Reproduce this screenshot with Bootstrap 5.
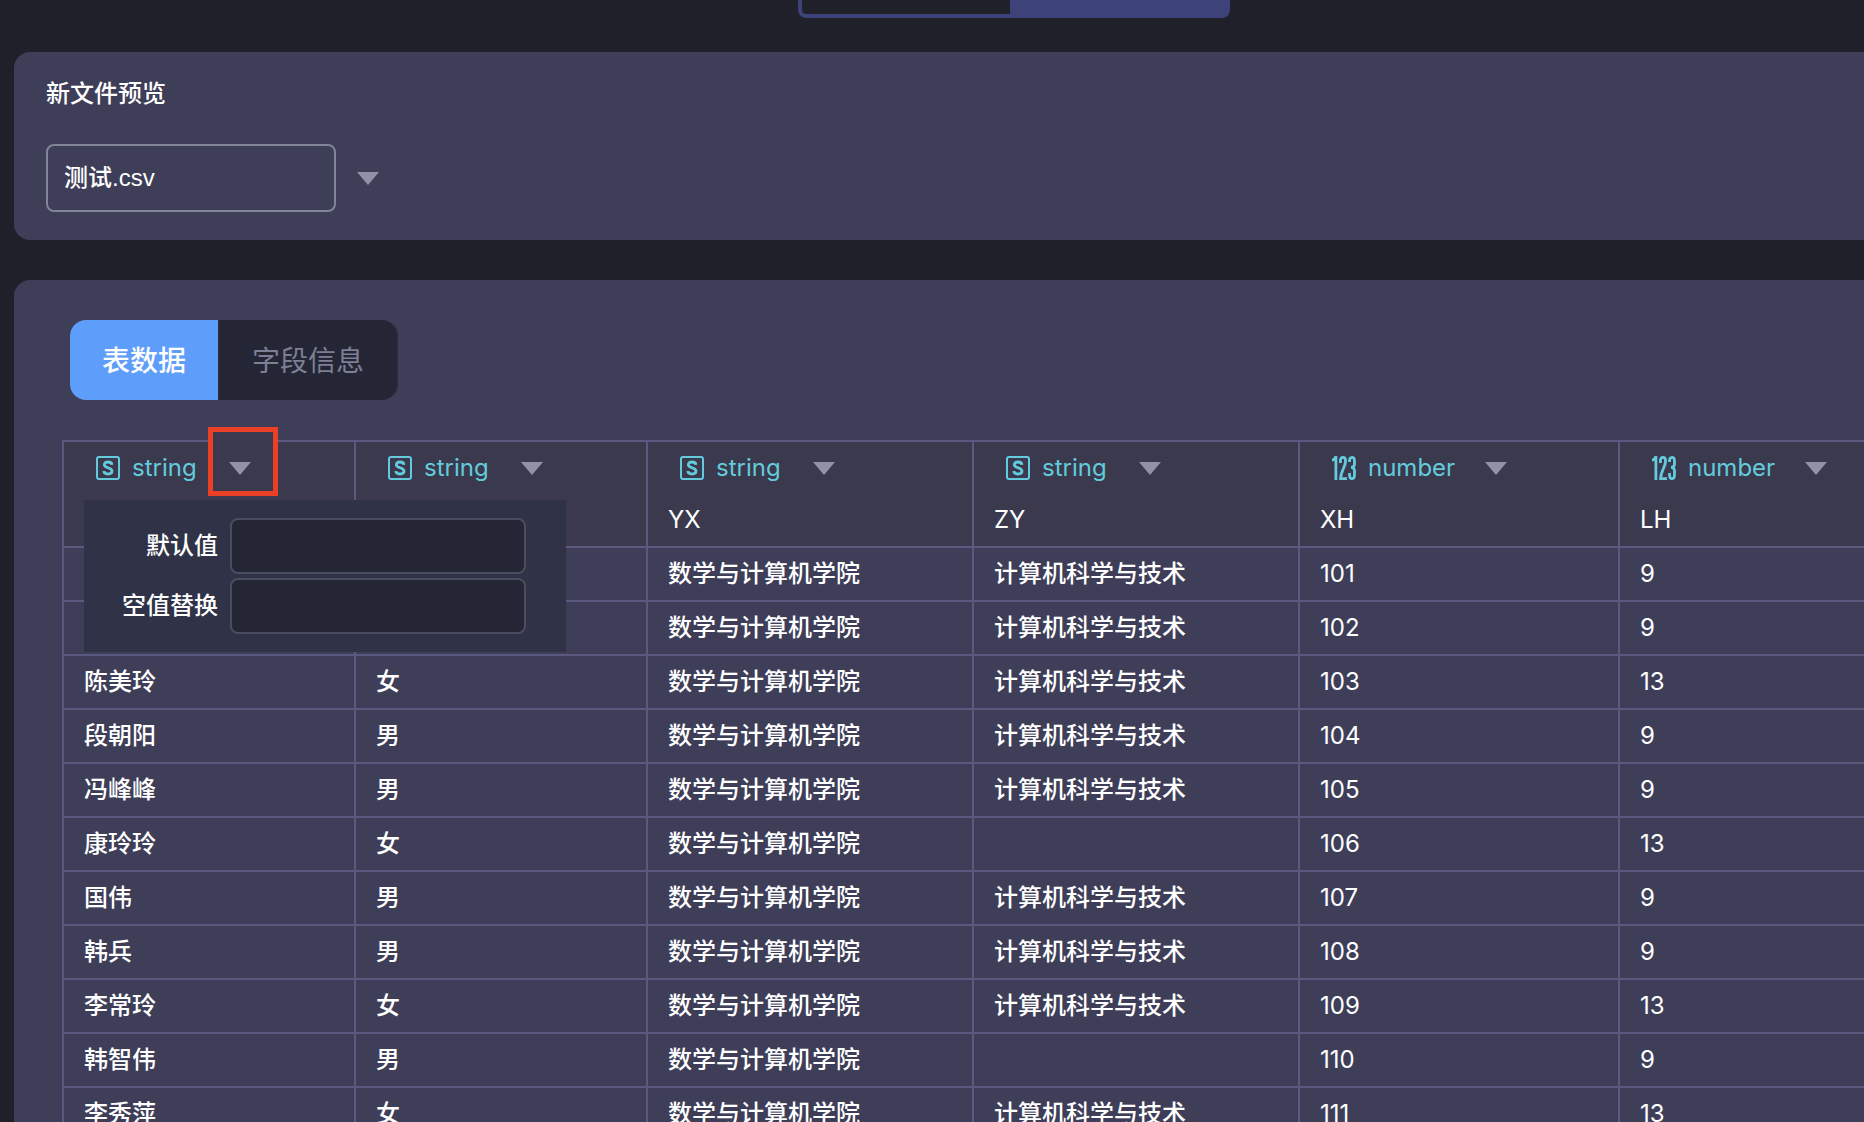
<!DOCTYPE html>
<html lang="zh-CN">
<head>
<meta charset="utf-8">
<meta name="viewport" content="width=device-width, initial-scale=1">
<title>新文件预览</title>
<link href="https://cdn.jsdelivr.net/npm/bootstrap@5.3.0/dist/css/bootstrap.min.css" rel="stylesheet">
<style>
  body { background: #20202b; color: #fff; font-family: Inter, "Noto Sans CJK SC", sans-serif; font-size: 24px; line-height: 36px; }
  .page-wide { width: calc(100% + 164px); padding: 0 14px; }
  .mode-switch { border: 4px solid #3d4279; border-top: 0; border-radius: 0 0 8px 8px; height: 18px; overflow: hidden; background: #3d4279; }
  .mode-switch button { width: 208px; border: 0; padding: 0; background: #20202b; border-radius: 0 0 0 4px; }
  .mode-switch button.is-on { width: 216px; background: #3d4279; }
  .panel { background: #3e3e59; border-radius: 16px; }
  .file-panel { padding: 24px 32px 28px; margin: 34px 0 40px; }
  .panel-title { font-size: 24px; line-height: 36px; font-weight: 500; margin: 0 0 32px; }
  .file-name { width: 290px; height: 68px; padding: 0 16px 6px; border: 2px solid #7f8496; border-radius: 8px; background: transparent; color: #fff; font-family: "Liberation Sans", "Noto Sans CJK SC", sans-serif; font-weight: 500; }
  .caret { border: 0; padding: 2px 0 0; background: none; display: flex; }
  .data-panel { padding: 40px 48px; border-bottom-left-radius: 0; }
  .view-tabs { margin: 0 0 40px 8px; }
  .view-tabs button { border: 0; height: 80px; padding: 2px 32px 0; font-size: 28px; background: #242636; color: #7d7f94; }
  .view-tabs button:first-child { background: #5e9df9; color: #fff; font-weight: 500; border-radius: 16px 0 0 16px; }
  .view-tabs button:last-child { border: solid #292b3c; border-width: 0 2px; border-radius: 0 16px 16px 0; }
  .data-grid { width: 1876px; table-layout: fixed; border-collapse: collapse; }
  .data-grid th, .data-grid td { border: 2px solid #5b597f; padding: 8px 20px; height: 54px; font-weight: 400; }
  .data-grid td:nth-child(-n+4) { font-weight: 500; }
  .data-grid th { background: #3a394e; background-clip: padding-box; height: 106px; padding: 8px 20px; vertical-align: top; }
  .c-short { width: 292px; } .c-long { width: 326px; } .c-num { width: 320px; }
  .kind { color: #63cbdb; padding-left: 12px; margin-bottom: 16px; }
  .kind-label { width: 63px; margin: 0 33px 0 12px; }
  .kind-label.is-number { width: 83px; }
  .kind .caret { position: relative; z-index: 1; }
  .focus-frame { position: absolute; left: 144px; top: -15px; width: 70px; height: 69px; border: 5px solid #eb4026; background: #3a394e; pointer-events: none; }
  .fill-menu { position: absolute; left: 20px; top: 58px; width: 482px; height: 152px; padding: 18px 40px 18px 20px; background: #303247; z-index: 2; font-weight: 500; }
  .fill-menu input { width: 296px; height: 56px; border: 2px solid #4c4c5f; border-radius: 8px; background: #242636; color: #fff; padding: 0 12px; }
</style>
</head>
<body class="overflow-hidden vh-100">
<div class="page-wide">
  <div class="d-flex justify-content-center">
    <div class="mode-switch d-flex" role="group">
      <button type="button" aria-label="模式一"></button>
      <button type="button" class="is-on" aria-label="模式二"></button>
    </div>
  </div>

  <section class="panel file-panel">
    <h1 class="panel-title">新文件预览</h1>
    <div class="d-flex align-items-center">
      <input class="file-name" type="text" value="测试.csv" aria-label="文件">
      <button type="button" class="caret ms-3 ps-1" aria-label="选择文件"><svg width="24" height="14" viewBox="0 0 24 14"><path d="M1 0h22L12 13z" fill="#9192a8"/></svg></button>
    </div>
  </section>

  <section class="panel data-panel">
    <div class="view-tabs d-flex">
      <button type="button">表数据</button>
      <button type="button">字段信息</button>
    </div>
    <table class="data-grid">
      <colgroup><col class="c-short"><col class="c-short"><col class="c-long"><col class="c-long"><col class="c-num"><col class="c-num"></colgroup>
      <thead><tr id="heads"></tr></thead>
      <tbody id="rows"></tbody>
    </table>
  </section>
</div>

<template id="menu">
  <div class="focus-frame"></div>
  <div class="fill-menu d-flex flex-column gap-1">
    <div class="d-flex align-items-center justify-content-end"><label class="me-2 pe-1 text-nowrap" for="defaultValue">默认值</label><input id="defaultValue" type="text"></div>
    <div class="d-flex align-items-center justify-content-end"><label class="me-2 pe-1 text-nowrap" for="nullValue">空值替换</label><input id="nullValue" type="text"></div>
  </div>
</template>

<script src="https://cdn.jsdelivr.net/npm/bootstrap@5.3.0/dist/js/bootstrap.bundle.min.js"></script>
<script>
  const icons = {
    string: '<svg width="24" height="24" viewBox="0 0 24 24" fill="none" stroke="#63cbdb"><rect x="1" y="1" width="22" height="22" rx="2" stroke-width="2"/><path d="M16 8.800C15.800 7 14.200 6 12 6 9.800 6 8.300 7 8.300 8.800 8.300 12.600 16 10.900 16 15.100 16 17 14.300 18 12 18 9.600 18 8 16.900 7.900 15" stroke-width="2.800"/></svg>',
    number: '<svg width="24" height="24" viewBox="0 0 24 24" fill="none" stroke="#63cbdb" stroke-width="2.800"><path d="M0 4.200Q3 3.800 3.900 0V24M8.400 7V5Q8.400 1.400 11 1.400T13.600 5C13.600 11 8.600 15 8.600 22.600H15M17.500 6V5Q17.500 1.400 20 1.400T22.500 5V8Q22.500 11.300 19 11.300Q22.500 11.300 22.500 15V19Q22.500 22.600 20 22.600T17.500 19V17"/></svg>'
  };
  const columns = [['XM', 'string'], ['XB', 'string'], ['YX', 'string'], ['ZY', 'string'], ['XH', 'number'], ['LH', 'number']];
  const caret = '<button type="button" class="caret" aria-label="展开"><svg width="24" height="14" viewBox="0 0 24 14"><path d="M1 0h22L12 13z" fill="#9192a8"/></svg></button>';
  document.getElementById('heads').innerHTML = columns.map(([name, kind], i) =>
    `<th class="position-relative" scope="col"><div class="kind d-flex align-items-center">${icons[kind]}<span class="kind-label is-${kind}">${kind}</span>${caret}</div>${i > 1 ? name : ''}${i ? '' : document.getElementById('menu').innerHTML}</th>`).join('');

  const people = [['', ''], ['', ''], ['陈美玲', '女'], ['段朝阳', '男'], ['冯峰峰', '男'], ['康玲玲', '女'], ['国伟', '男'], ['韩兵', '男'], ['李常玲', '女'], ['韩智伟', '男'], ['李秀萍', '女']];
  const rooms = [9, 9, 13, 9, 9, 13, 9, 9, 13, 9, 13];
  const noMajor = [106, 110];
  document.getElementById('rows').innerHTML = people.map(([name, sex], i) => {
    const id = 101 + i;
    return `<tr><td>${name}</td><td>${sex}</td><td>数学与计算机学院</td><td>${noMajor.includes(id) ? '' : '计算机科学与技术'}</td><td>${id}</td><td>${rooms[i]}</td></tr>`;
  }).join('');
</script>
</body>
</html>
